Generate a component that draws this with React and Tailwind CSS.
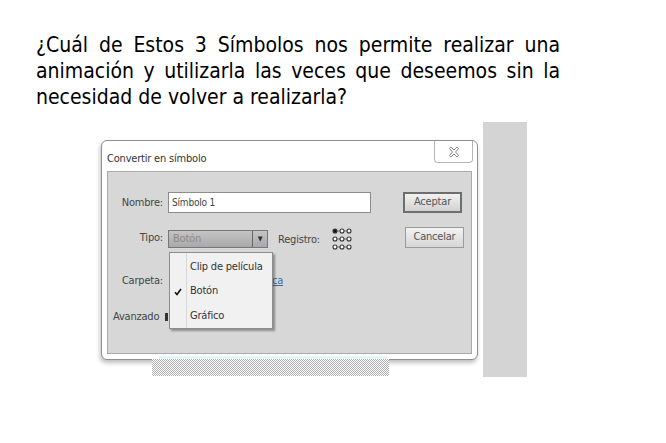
import React from 'react';

const uiFont = { fontFamily: "'Liberation Sans Narrow', 'DejaVu Sans Condensed', 'Liberation Sans', sans-serif" };

const CloseIcon = () => (
  <svg width="12" height="12" viewBox="0 0 12 12" fill="none" stroke="#8a8a8a" strokeWidth="1">
    <path d="M1.5 2.5 L3 1 L6 4 L9 1 L10.5 2.5 L7.5 6 L10.5 9.5 L9 11 L6 8 L3 11 L1.5 9.5 L4.5 6 Z" />
  </svg>
);

const RegistroGrid = () => (
  <svg width="20" height="24" viewBox="0 0 20 24">
    {[0, 1, 2].map((r) =>
      [0, 1, 2].map((c) => {
        const filled = r === 0 && c === 0;
        return (
          <circle
            key={`${r}-${c}`}
            cx={3 + c * 7}
            cy={3 + r * 8}
            r="2"
            fill={filled ? '#111' : '#fff'}
            stroke="#333"
            strokeWidth="1.1"
          />
        );
      })
    )}
    {[0, 1, 2].map((r) => (
      <path key={r} d={`M5 ${3 + r * 8} H8 M12 ${3 + r * 8} H15`} stroke="#555" strokeWidth="0.8" />
    ))}
  </svg>
);

const TypeMenu = () => (
  <div className="absolute left-[61px] top-[80px] w-[104px] h-[77px] bg-[#f1f1f1] border border-[#8d8d8d] shadow-[2px_2px_2px_rgba(0,0,0,0.35)] flex text-[11px] text-[#333]">
    <div className="w-[17px] border-r border-[#d8d8d8] flex flex-col">
      <div className="h-[25px]" />
      <div className="h-[25px] flex items-center justify-center pt-[2px]">
        <svg width="8" height="8" viewBox="0 0 8 8">
          <path d="M1 4.2 L3 6.5 L7 1" stroke="#111" strokeWidth="1.6" fill="none" />
        </svg>
      </div>
    </div>
    <div className="flex flex-col pl-[3px] pt-[2px]">
      <div className="h-[25px] flex items-center">Clip de película</div>
      <div className="h-[25px] flex items-center">Botón</div>
      <div className="h-[25px] flex items-center">Gráfico</div>
    </div>
  </div>
);

const ConvertDialog = () => (
  <div className="w-[377px] h-[220px] bg-white border border-[#8f8f8f] rounded-[6px] shadow-[-1px_3px_4px_rgba(0,0,0,0.25)] flex flex-col" style={uiFont}>
    <div className="h-[30px] flex items-start justify-between">
      <div className="pl-[5px] pt-[10px] text-[11px] text-[#333] tracking-[-0.2px]">Convertir en símbolo</div>
      <div className="mr-[4px] w-[39px] h-[22px] border border-t-0 border-[#b5b5b5] rounded-b-[4px] bg-white flex items-center justify-center">
        <CloseIcon />
      </div>
    </div>
    <div className="relative mx-[5px] mb-[5px] flex-1 bg-[#d7d7d7] border border-[#a9a9a9] text-[11px] text-[#444] tracking-[-0.2px]">
      <div className="mt-[20px] h-[22px] flex items-start">
        <div className="w-[55px] h-[22px] flex items-center justify-end">Nombre:</div>
        <div className="ml-[5px] w-[203px] h-[21px] bg-white border border-[#8c8c8c] flex items-center pl-[3px] text-[10px] text-[#444]">
          Símbolo 1
        </div>
        <div className="ml-[32px] w-[59px] h-[21px] border-2 border-[#6e6e6e] bg-gradient-to-b from-[#f2f2f2] to-[#d2d2d2] flex items-center justify-center text-[#555]">
          Aceptar
        </div>
      </div>
      <div className="mt-[13px] h-[26px] flex items-start">
        <div className="w-[55px] h-[22px] flex items-center justify-end">Tipo:</div>
        <div className="ml-[5px] mt-[3px] w-[100px] h-[18px] border border-[#777] bg-gradient-to-b from-[#c4c4c4] to-[#a9a9a9] flex items-center">
          <div className="flex-1 pl-[4px] text-[#8a8a8a]">Botón</div>
          <div className="w-[15px] h-full border-l border-[#666] flex items-center justify-center text-[7px] text-[#333]">▼</div>
        </div>
        <div className="ml-[10px] h-[26px] flex items-center">Registro:</div>
        <div className="ml-[12px] mt-[1px]">
          <RegistroGrid />
        </div>
        <div className="ml-[53px] w-[59px] h-[21px] border border-[#9a9a9a] bg-gradient-to-b from-[#f2f2f2] to-[#d6d6d6] flex items-center justify-center text-[#555]">
          Cancelar
        </div>
      </div>
      <div className="mt-[20px] h-[16px] flex items-center">
        <div className="w-[55px] text-right">Carpeta:</div>
        <div className="ml-[109px] text-[#3a6ea5] underline">ca</div>
      </div>
      <div className="mt-[20px] h-[16px] flex items-center pl-[5px]">
        <div>Avanzado</div>
        <div className="ml-[6px] w-[3px] h-[8px] bg-[#333]" />
      </div>
      <TypeMenu />
    </div>
  </div>
);

const App = () => {
  return (
    <div className="w-[666px] h-[443px] bg-white overflow-hidden">
      <div
        className="pl-[36px] w-[560px] pt-[32px] text-[21px] leading-[26px] text-black"
        style={{ fontFamily: "'Liberation Sans Narrow', 'DejaVu Sans Condensed', 'Liberation Sans', sans-serif" }}
      >
        <div className="text-justify [text-align-last:justify]">¿Cuál de Estos 3 Símbolos nos permite realizar una</div>
        <div className="text-justify [text-align-last:justify]">animación y utilizarla las veces que deseemos sin la</div>
        <div>necesidad de volver a realizarla?</div>
      </div>
      <div className="mt-[12px] flex items-start">
        <div className="ml-[101px] mt-[18px] flex flex-col">
          <ConvertDialog />
          <div className="ml-[58px] w-[228px] h-[3px] bg-[#e3f7f9] -mt-[4px]" />
          <div className="ml-[51px] w-[237px] h-[17px] bg-[repeating-conic-gradient(#b0b0b0_0%_25%,#ffffff_0%_50%)] bg-[length:2px_2px]" />
        </div>
        <div className="ml-[5px] w-[44px] h-[255px] bg-[#d4d4d4]" />
      </div>
    </div>
  );
};

export default App;
